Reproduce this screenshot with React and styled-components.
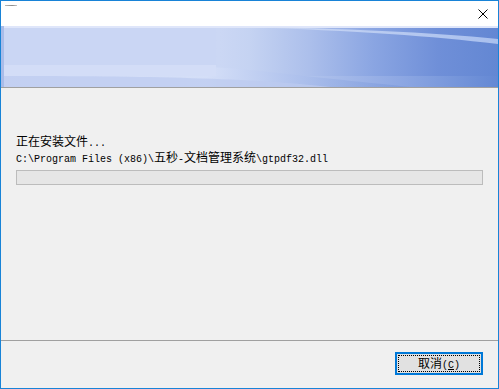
import React from "react";
import styled, { createGlobalStyle } from "styled-components";

const GlobalStyle = createGlobalStyle`
    html, body {
        margin: 0;
        padding: 0;
        background: #ffffff;
    }
    * {
        box-sizing: border-box;
    }
`;

const Window = styled.div`
    width: 499px;
    height: 389px;
    border: 1px solid #1883d7;
    display: flex;
    flex-direction: column;
    background: #f0f0f0;
    font-family: "Noto Sans CJK SC", "Liberation Sans", sans-serif;
    color: #000000;
    overflow: hidden;
`;

const TitleBar = styled.div`
    height: 25px;
    background: #ffffff;
    display: flex;
    align-items: flex-start;
    justify-content: space-between;
    padding: 4px 10px 0 4px;
`;

const TitleIcon = styled.div`
    width: 12px;
    height: 1px;
    background: linear-gradient(to right, #b8b8b8, #8a8a8a 60%, #c4c4c4);
`;

const CloseButton = styled.div`
    width: 10px;
    height: 10px;
    margin-top: 4px;
    display: flex;
    & > svg {
        display: block;
    }
`;

const Banner = styled.div`
    height: 62px;
    border-bottom: 1px solid #a0a0a0;
    & > svg {
        display: block;
    }
`;

const Body = styled.div`
    flex: 1;
    padding: 47px 15px 0 15px;
    display: flex;
    flex-direction: column;
`;

const Line = styled.div`
    height: 12px;
    line-height: 12px;
    font-size: 12px;
    white-space: nowrap;
    margin-top: ${(p) => p.$gap || 0}px;
    display: flex;
    align-items: baseline;
`;

const Ascii = styled.span`
    font-family: "Liberation Mono", monospace;
    font-size: 10px;
    line-height: 12px;
`;

const Cjk = styled.span`
    font-family: "Noto Sans CJK SC", sans-serif;
    font-size: 12px;
    line-height: 12px;
`;

const ProgressTrack = styled.div`
    margin-top: 7px;
    height: 15px;
    width: 467px;
    border: 1px solid #bcbcbc;
    background: #e6e6e6;
`;

const Footer = styled.div`
    height: 48px;
    border-top: 1px solid #a0a0a0;
    display: flex;
    justify-content: flex-end;
    align-items: flex-start;
    padding: 11px 15px 0 0;
`;

const Button = styled.button`
    width: 88px;
    height: 23px;
    padding: 0;
    border: 2px solid #0078d7;
    background: #e1e1e1;
    outline: 1px dotted #000000;
    outline-offset: -4px;
    display: flex;
    align-items: baseline;
    justify-content: center;
    padding-top: 3px;
    font-family: "Noto Sans CJK SC", sans-serif;
    font-size: 12px;
    color: #000000;
    line-height: 12px;
`;

const Hotkey = styled.span`
    text-decoration: underline;
    text-underline-offset: 1px;
`;

const BannerArt = () => (
    <svg width="497" height="61" viewBox="0 0 497 61">
        <defs>
            <linearGradient id="base" x1="0" y1="0" x2="1" y2="0">
                <stop offset="0" stopColor="#c9d5f3" />
                <stop offset="0.44" stopColor="#cbd7f4" />
                <stop offset="0.5" stopColor="#c5d3f2" />
                <stop offset="0.62" stopColor="#acbfeb" />
                <stop offset="0.75" stopColor="#8aa5e2" />
                <stop offset="0.88" stopColor="#6f8fd8" />
                <stop offset="1" stopColor="#6387d3" />
            </linearGradient>
            <linearGradient id="swoosh" x1="0" y1="0" x2="1" y2="0">
                <stop offset="0" stopColor="#d6dff8" />
                <stop offset="0.5" stopColor="#d6e0f8" />
                <stop offset="0.75" stopColor="#a9bdeb" />
                <stop offset="1" stopColor="#6c8dd6" stopOpacity="0.4" />
            </linearGradient>
            <linearGradient id="under" x1="0" y1="0" x2="1" y2="0">
                <stop offset="0" stopColor="#adbeea" />
                <stop offset="0.5" stopColor="#c8d5f3" />
                <stop offset="0.8" stopColor="#8ea8e3" />
                <stop offset="1" stopColor="#6488d4" />
            </linearGradient>
            <linearGradient id="top" x1="0" y1="0" x2="1" y2="0">
                <stop offset="0" stopColor="#e3eafb" stopOpacity="0" />
                <stop offset="0.3" stopColor="#c8d6f4" stopOpacity="0.9" />
                <stop offset="1" stopColor="#a9c0ee" />
            </linearGradient>
        </defs>
        <rect x="0" y="0" width="497" height="61" fill="url(#base)" />
        <rect x="0" y="0" width="497" height="2" fill="#dfe6fa" />
        <path d="M0 50 L497 50 L497 61 L0 61 Z" fill="url(#under)" />
        <path d="M0 40 C120 39 200 38 260 45 C330 53 380 58 410 61 L0 61 Z" fill="url(#swoosh)" opacity="0.9" />
        <path d="M0 50 C150 50 250 52 330 61 L0 61 Z" fill="#bccbf0" opacity="0.7" />
        <path d="M240 0 C340 3 430 6 497 13 L497 18 C430 10 360 5 240 1 Z" fill="url(#top)" />
        <rect x="3" y="2" width="212" height="48" fill="#cad6f4" />
        <rect x="3" y="39" width="212" height="11" fill="#d3ddf7" />
        <rect x="0" y="0" width="3" height="61" fill="#a9bce9" />
    </svg>
);

const CloseIcon = () => (
    <svg width="10" height="10" viewBox="0 0 10 10">
        <path d="M0.5 0.5 L9.5 9.5 M9.5 0.5 L0.5 9.5" stroke="#000000" strokeWidth="1" />
    </svg>
);

const App = () => {
    return (
        <React.Fragment>
            <GlobalStyle />
            <Window>
                <TitleBar>
                    <TitleIcon />
                    <CloseButton>
                        <CloseIcon />
                    </CloseButton>
                </TitleBar>
                <Banner>
                    <BannerArt />
                </Banner>
                <Body>
                    <Line>
                        <Cjk>正在安装文件</Cjk>
                        <Ascii>...</Ascii>
                    </Line>
                    <Line $gap={4}>
                        <Ascii>C:\Program Files (x86)\</Ascii>
                        <Cjk>五秒</Cjk>
                        <Ascii>-</Ascii>
                        <Cjk>文档管理系统</Cjk>
                        <Ascii>\gtpdf32.dll</Ascii>
                    </Line>
                    <ProgressTrack />
                </Body>
                <Footer>
                    <Button>
                        <Cjk>取消</Cjk>
                        <Ascii>
                            (<Hotkey>C</Hotkey>)
                        </Ascii>
                    </Button>
                </Footer>
            </Window>
        </React.Fragment>
    );
};

export default App;
